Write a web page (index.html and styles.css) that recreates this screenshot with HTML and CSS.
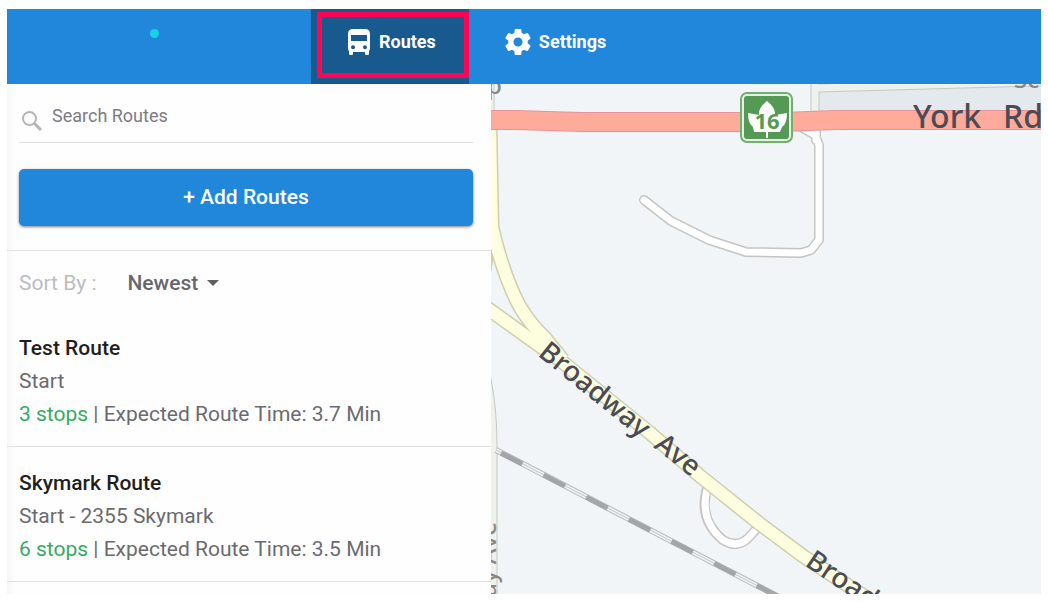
FILE: index.html
```html
<!DOCTYPE html>
<html lang="en">
<head>
    <meta charset="UTF-8">
    <meta name="viewport" content="width=device-width, initial-scale=1.0">
    <title>Routes</title>
    <link rel="stylesheet" href="styles.css">
</head>
<body>
    <header class="topbar">
        <div class="brand"><span class="brand-dot"></span></div>
        <nav class="tabs">
            <a href="#routes" class="tab active">
                <svg class="tab-icon" viewBox="0 0 24 26" aria-hidden="true">
                    <path fill="#fff" fill-rule="evenodd" d="M6 0h12q5 0 5 5v14q0 2-1 3v3q0 1-1 1h-2q-1 0-1-1v-2H6v2q0 1-1 1H3q-1 0-1-1v-3q-1-1-1-3V5q0-5 5-5zM4 6v6h16V6zM6 16.200a2 2 0 1 0 0 4 2 2 0 0 0 0-4zM18 16.200a2 2 0 1 0 0 4 2 2 0 0 0 0-4z"/>
                </svg>
                Routes
                <span class="highlight"></span>
            </a>
            <a href="#settings" class="tab">
                <svg class="tab-icon" viewBox="2 2 20 20" aria-hidden="true">
                    <path fill="#fff" d="M19.430 12.980c.04-.32.07-.64.07-.98s-.03-.66-.07-.98l2.110-1.650c.19-.15.24-.42.12-.64l-2-3.460c-.12-.22-.39-.3-.61-.22l-2.490 1c-.52-.4-1.080-.73-1.690-.98l-.38-2.650C14.460 2.180 14.250 2 14 2h-4c-.25 0-.46.18-.49.42l-.38 2.650c-.61.25-1.170.59-1.690.98l-2.490-1c-.23-.09-.49 0-.61.22l-2 3.460c-.13.22-.07.49.12.64l2.110 1.650c-.04.32-.07.65-.07.98s.03.66.07.98l-2.110 1.650c-.19.15-.24.42-.12.64l2 3.460c.12.22.39.3.61.22l2.490-1c.52.4 1.080.73 1.690.98l.38 2.650c.03.24.24.42.49.42h4c.25 0 .46-.18.49-.42l.38-2.650c.61-.25 1.170-.59 1.690-.98l2.490 1c.23.09.49 0 .61-.22l2-3.460c.12-.22.07-.49-.12-.64l-2.110-1.650zM12 15.500c-1.930 0-3.500-1.570-3.500-3.500s1.570-3.500 3.500-3.500 3.500 1.570 3.500 3.500-1.570 3.500-3.500 3.500z"/>
                </svg>
                Settings
            </a>
        </nav>
    </header>

    <main class="content">
        <section class="sidebar">
            <div class="tools">
                <label class="search">
                    <svg class="search-icon" viewBox="0 0 20 20" aria-hidden="true">
                        <circle cx="7.500" cy="7.500" r="6.500" fill="none" stroke="#b5b5b9" stroke-width="2"/>
                        <path d="M12.500 12.500L19 19" stroke="#b5b5b9" stroke-width="3"/>
                    </svg>
                    <input type="text" placeholder="Search Routes" aria-label="Search Routes">
                </label>
                <button type="button" class="add-btn">+ Add Routes</button>
            </div>

            <div class="sort">
                <label for="sort-by">Sort By :</label>
                <div class="select-wrap">
                    <select id="sort-by">
                        <option>Newest</option>
                    </select>
                </div>
            </div>

            <ul class="routes">
                <li class="route">
                    <h2>Test Route</h2>
                    <p>Start</p>
                    <p><span class="stops">3 stops</span> | Expected Route Time: 3.7 Min</p>
                </li>
                <li class="route">
                    <h2>Skymark Route</h2>
                    <p>Start - 2355 Skymark</p>
                    <p><span class="stops">6 stops</span> | Expected Route Time: 3.5 Min</p>
                </li>
            </ul>
        </section>

        <section class="map" aria-label="Map">
            <svg class="map-canvas" viewBox="0 -1 550 510" preserveAspectRatio="xMinYMin slice">
                <!-- area north of York Rd -->
                <path class="block" d="M328 7L550 1V26H328z"/>

                <!-- side streets -->
                <path class="lane-edge" d="M324 -5V32M326 3L400 1L550 -3"/>
                <path class="lane" d="M324 -5V32M326 3L400 1L550 -3"/>
                <path class="lane-edge" d="M-6 285Q2 320 2 360V515M-1 -5V30"/>
                <path class="lane" d="M-6 285Q2 320 2 360V515M-1 -5V30"/>
                <path class="street-edge" d="M153 115L180 136L218 155L255 167L310 168L320 165L328 155V60L324 50L306 40M325 55V34"/>
                <path class="street" d="M153 115L180 136L218 155L255 167L310 168L320 165L328 155V60L324 50L306 40M325 55V34"/>
                <path class="street-edge" d="M217 400C209 424 216 442 232 455Q248 465 260 450L269 440"/>
                <path class="street" d="M218 397C209 424 216 442 232 455Q248 465 260 450L272 436"/>

                <!-- railway -->
                <path class="rail-edge" d="M5 365L290 513"/>
                <path class="rail-bed" d="M5 365L290 513"/>
                <path class="rail-line" d="M5 365L290 513"/>
                <path class="rail" d="M10 368L290 513"/>

                <!-- Broadway Ave -->
                <path class="main-edge" d="M-1 40L1 142Q12 190 29 222Q40 240 54 253L72 275M-8 220L46 259L69 275L159 348L209 391L269 439L312 471L382 517M-1 150L-8 190"/>
                <path class="main" d="M-1 40L1 142Q12 190 29 222Q40 240 54 253L72 275M-8 220L46 259L69 275L159 348L209 391L269 439L312 471L382 517"/>

                <!-- York Rd -->
                <path class="highway-edge" d="M-5 35H25L90 37H290L345 35H555"/>
                <path class="highway" d="M-5 35H25L90 37H290L345 35H555"/>

                <g class="shield">
                    <rect x="249" y="7" width="53" height="51" rx="7" fill="#71ae70"/>
                    <rect x="252" y="10" width="47" height="45" rx="4" fill="#549a54" stroke="#e6f1e5" stroke-width="2"/>
                    <path fill="#fff" d="M276 16Q285 23 284 30L296 28Q296 39 291 42L289 47H277V53H275V47H263L262 42Q257 38 257 28L268 30Q267 23 276 16z"/>
                    <text x="276" y="44" text-anchor="middle">16</text>
                </g>

                <g class="label">
                    <text class="label-york" x="422" y="43">York</text>
                    <text class="label-york" x="512" y="43">Rd</text>
                    <text transform="translate(46 270) rotate(39)">Broadway</text>
                    <text transform="translate(162 362) rotate(38)">Ave</text>
                    <text transform="translate(313 480) rotate(34)">Broadway</text>
                </g>
                <g class="label label-minor">
                    <text x="523" y="3">Sc</text>
                    <text x="-4" y="9">p</text>
                    <text transform="translate(5 437) rotate(-90)" text-anchor="end">Broadway Ave</text>
                </g>
            </svg>
        </section>
    </main>
</body>
</html>
```
FILE: styles.css
```css
* {
    box-sizing: border-box;
}
body {
    margin: 0;
    padding: 9px 7px 8px;
    min-height: 100vh;
    display: flex;
    flex-direction: column;
    font-family: Roboto, "Liberation Sans", sans-serif;
    background-color: #fff;
    color: #6b6b6e;
}

/* Top bar */
.topbar {
    display: flex;
    height: 75px;
    background-color: #2187db;
}
.brand {
    width: 304px;
    padding: 20px 10px 0 0;
}
.brand-dot {
    display: block;
    width: 9px;
    height: 9px;
    margin: 0 auto;
    border-radius: 50%;
    background-color: #14d3e6;
}
.tabs {
    display: flex;
}
.tab {
    position: relative;
    display: flex;
    align-items: center;
    gap: 8px;
    padding: 0 33px 10px 36px;
    color: #fff;
    font-size: 18px;
    font-weight: 700;
    text-decoration: none;
}
.tab.active {
    background-color: #185a8d;
}
.tab-icon {
    width: 26px;
    height: 26px;
}
.active .tab-icon {
    width: 24px;
}
.highlight {
    position: absolute;
    top: 3px;
    right: 0;
    bottom: 6px;
    left: 6px;
    border: 5px solid #ff0454;
}

/* Sidebar */
.content {
    flex: 1;
    display: grid;
    grid-template-columns: 484px 1fr;
}
.sidebar {
    background: linear-gradient(to right, #f6f6f6, #fefefe 8px);
}
.tools {
    padding: 0 18px 24px 12px;
    border-bottom: 1px solid #e0e0e0;
}
.search {
    display: flex;
    gap: 10px;
    padding: 19px 0 11px 3px;
    border-bottom: 1px solid #e0e0e0;
}
.search-icon {
    width: 20px;
    height: 20px;
    margin-top: 8px;
}
.search input {
    flex: 1;
    height: 24px;
    padding: 0;
    border: none;
    outline: none;
    background: none;
    font-family: inherit;
    font-size: 18px;
    color: #6b6b6e;
}
.search input::placeholder {
    color: #7c7c84;
    opacity: 1;
}
.add-btn {
    display: block;
    width: 100%;
    height: 57px;
    margin-top: 26px;
    padding: 0 0 2px;
    border: none;
    border-radius: 5px;
    background-color: #2187db;
    box-shadow: 0 1px 3px rgba(0, 0, 0, 0.5);
    color: #fff;
    font-family: inherit;
    font-size: 21px;
    font-weight: 500;
    cursor: pointer;
}
.sort {
    display: flex;
    align-items: center;
    gap: 31px;
    height: 61px;
    padding: 2px 12px 0;
    font-size: 21px;
}
.sort label {
    color: #bcbcc3;
}
.select-wrap {
    display: flex;
    align-items: center;
    gap: 9px;
}
.select-wrap::after {
    content: "";
    border: 6px solid transparent;
    border-top-color: #5f5f66;
    border-bottom: none;
}
.select-wrap select {
    appearance: none;
    padding: 0;
    border: none;
    background: none;
    color: #66666d;
    font-family: inherit;
    font-size: 21px;
    font-weight: 500;
}
.routes {
    margin: 0;
    padding: 0;
    list-style: none;
}
.route {
    padding: 20px 12px 15px;
    border-bottom: 1px solid #e0e0e0;
    font-size: 21px;
    line-height: 33px;
}
.route h2 {
    margin: 0;
    color: #1f1f1f;
    font-size: 21px;
    font-weight: 500;
}
.route p {
    margin: 0;
}
.stops {
    color: #35aa63;
}

/* Map */
.map {
    position: relative;
    overflow: hidden;
    background-color: #f1f5f8;
}
.map-canvas {
    position: absolute;
    width: 100%;
    height: 100%;
}
.map-canvas path {
    fill: none;
    stroke-linejoin: round;
}
.map-canvas .block {
    fill: #e3e9ec;
}
.lane-edge {
    stroke: #c6c8c5;
    stroke-width: 9;
}
.lane {
    stroke: #eff1ed;
    stroke-width: 7;
}
.street-edge {
    stroke: #c4c4c2;
    stroke-width: 10;
    stroke-linecap: round;
}
.street {
    stroke: #fff;
    stroke-width: 7;
    stroke-linecap: round;
}
.rail-edge {
    stroke: #b9bbbb;
    stroke-width: 6;
}
.rail-bed {
    stroke: #eef1f2;
    stroke-width: 4;
}
.rail-line {
    stroke: #c5c8c8;
    stroke-width: 1;
}
.rail {
    stroke: #a3a6a6;
    stroke-width: 5;
    stroke-dasharray: 24 24;
}
.main-edge {
    stroke: #cfcfb0;
    stroke-width: 15;
}
.main {
    stroke: #fdfddf;
    stroke-width: 12;
}
.highway-edge {
    stroke: #e6939a;
    stroke-width: 20;
}
.highway {
    stroke: #ffab9b;
    stroke-width: 18;
}
.map-canvas .shield path {
    fill: #fff;
}
.shield text {
    fill: #549a54;
    font-family: "Noto Sans", sans-serif;
    font-size: 22px;
    font-weight: 700;
}
.label text {
    fill: #4b4b55;
    font-family: "Noto Sans", sans-serif;
    font-size: 28px;
    font-weight: 500;
}
.label .label-york {
    font-size: 32px;
}
.label-minor text {
    fill: #8b8583;
    font-size: 24px;
}
```
